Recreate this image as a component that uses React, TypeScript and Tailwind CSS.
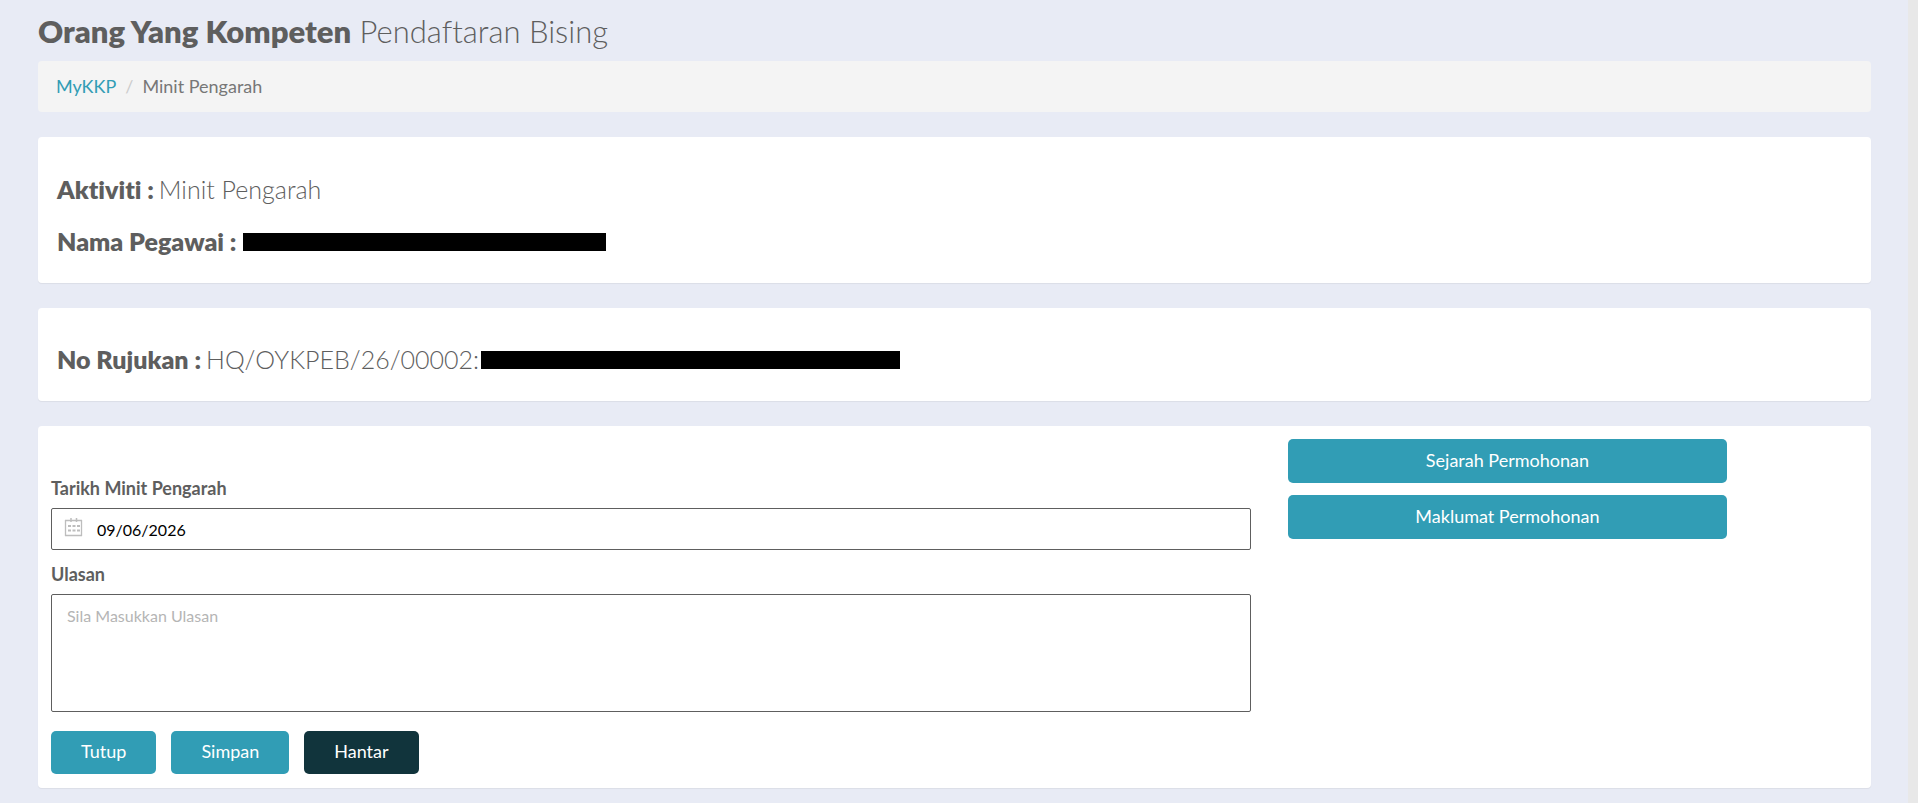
import type { ReactNode } from "react"
import clsx from "clsx"

function Card({ children, className }: { children: ReactNode; className?: string }) {
  return (
    <section className={clsx("mb-[25px] rounded bg-white shadow-[0_1px_1px_rgba(0,0,0,0.06)]", className)}>
      {children}
    </section>
  )
}

function InfoLine({ label, children }: { label: string; children: ReactNode }) {
  return (
    <h3 className="flex items-center text-[25px] leading-[30px] font-light">
      <strong className="mr-[5px] font-extrabold">{label} :</strong>
      {children}
    </h3>
  )
}

function Button({ children, className }: { children: ReactNode; className?: string }) {
  return (
    <button
      type="button"
      className={clsx("rounded-[5px] pt-[7px] pb-[9px] text-lg leading-[27px] text-white", className)}
    >
      {children}
    </button>
  )
}

function CalendarIcon() {
  return (
    <svg
      className="pointer-events-none absolute top-[10px] left-[13px]"
      width="19"
      height="19"
      viewBox="0 0 19 19"
      fill="none"
      stroke="#bdbdbd"
      aria-hidden="true"
    >
      <path d="M1 2.5h17M1 17.5h17" strokeWidth="1.3" />
      <path d="M1.5 2v16M17.5 2v16" strokeWidth="1.3" />
      <path d="M7 0v4M12.5 0v4" strokeWidth="1.5" />
      <path d="M4 8h3M8.5 8h3M13 8h3M4 12.5h3M8.5 12.5h3M13 12.5h3" strokeWidth="2" />
    </svg>
  )
}

export default function App() {
  return (
    <div className="min-h-screen border-r-10 border-[#e8e8e8] bg-[#e8ebf5] pr-[37px] pl-[38px] font-[Lato,sans-serif] text-[#5e5e5e] [font-variant-ligatures:none]">
      <h1 className="pt-[13px] pb-3 text-[31px] leading-9 font-light">
        <strong className="font-extrabold">Orang Yang Kompeten</strong> Pendaftaran Bising
      </h1>

      <nav
        aria-label="Breadcrumb"
        className="mb-[25px] flex rounded bg-[#f4f4f4] px-[18px] py-3 text-lg leading-[27px]"
      >
        <a href="#" className="text-[#319db5]">MyKKP</a>
        <span className="px-[9px] text-[#cccccc]">/</span>
        <span className="text-[#777777]">Minit Pengarah</span>
      </nav>

      <Card className="flex flex-col gap-[22px] px-[19px] pt-[37px] pb-[27px]">
        <InfoLine label="Aktiviti">Minit Pengarah</InfoLine>
        <InfoLine label="Nama Pegawai">
          <span className="mt-[2px] ml-[2px] h-[18px] w-[363px] bg-black" />
        </InfoLine>
      </Card>

      <Card className="px-[19px] pt-9 pb-[27px]">
        <InfoLine label="No Rujukan">
          HQ/OYKPEB/26/00002:
          <span className="mt-[2px] ml-[2px] h-[18px] w-[419px] bg-black" />
        </InfoLine>
      </Card>

      <Card className="flex gap-[37px] px-[13px] pt-[13px] pb-[14px]">
        <form className="flex flex-[1200] flex-col pt-9">
          <label htmlFor="tarikh" className="mb-[6px] text-lg leading-[27px] font-bold">
            Tarikh Minit Pengarah
          </label>
          <div className="relative">
            <CalendarIcon />
            <input
              id="tarikh"
              type="text"
              defaultValue="09/06/2026"
              className="block h-[42px] w-full rounded-[2px] border border-[#5e5e5e] bg-white pr-4 pl-[45px] text-base text-black"
            />
          </div>
          <label htmlFor="ulasan" className="mt-[11px] mb-[6px] text-lg leading-[27px] font-bold">
            Ulasan
          </label>
          <textarea
            id="ulasan"
            placeholder="Sila Masukkan Ulasan"
            className="block h-[118px] w-full resize-none rounded-[2px] border border-[#5e5e5e] bg-white px-[15px] py-[9px] text-base text-black placeholder:text-[#b5b5b5]"
          />
          <div className="mt-[19px] flex gap-[15px]">
            <Button className="bg-[#319db5] px-[30px]">Tutup</Button>
            <Button className="bg-[#319db5] px-[30px]">Simpan</Button>
            <Button className="bg-[#11343c] px-[30px]">Hantar</Button>
          </div>
        </form>

        <div className="flex flex-[570] flex-col gap-3">
          <Button className="h-11 w-[77%] bg-[#319db5]">Sejarah Permohonan</Button>
          <Button className="h-11 w-[77%] bg-[#319db5]">Maklumat Permohonan</Button>
        </div>
      </Card>
    </div>
  )
}
